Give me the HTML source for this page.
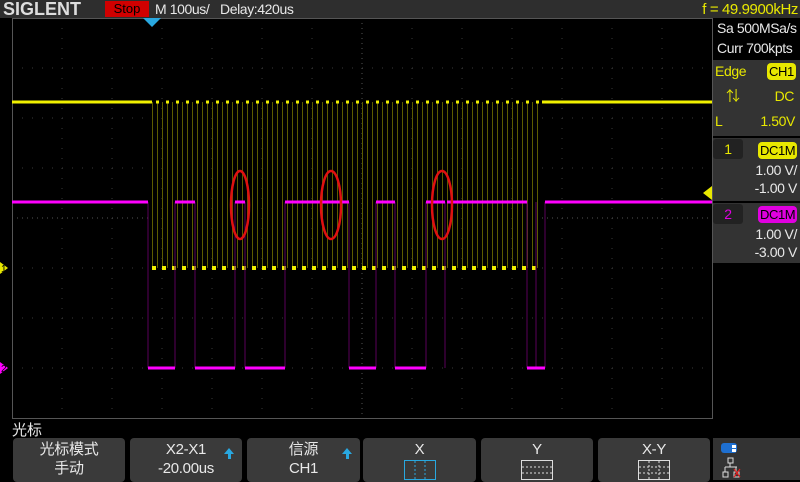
<!DOCTYPE html>
<html><head><meta charset="utf-8"><style>
*{margin:0;padding:0;box-sizing:border-box}
body{width:800px;height:480px;background:#000;position:relative;overflow:hidden;font-family:"Liberation Sans","Noto Sans CJK SC",sans-serif;color:#fff}
.a{position:absolute;white-space:nowrap}
.btn{position:absolute;top:438px;height:44px;background:#3a3a3a;border-radius:4px;text-align:center;font-size:15px;line-height:19px;padding-top:2px;color:#e8e8e8;letter-spacing:-0.3px}
.arr{position:absolute;right:8px;top:10px;width:0;height:0;border-left:5px solid transparent;border-right:5px solid transparent;border-bottom:6px solid #29a8e0}
.arr:after{content:"";position:absolute;left:-1px;top:6px;width:3px;height:5px;background:#29a8e0}
.y{color:#e8e800}
.s{font-size:14px;letter-spacing:-0.4px}
.badge{position:absolute;border-radius:4px;font-size:13px;line-height:17px;padding:0 2px;color:#000;letter-spacing:-0.4px}
</style></head><body>
<div class="a" style="left:0;top:0;width:800px;height:18px;background:#2e2e2e"></div>
<div class="a" style="left:3px;top:-1px;font-weight:bold;font-size:18px;color:#ddd;transform:scaleX(1.0);transform-origin:left">SIGLENT</div>
<div class="a" style="left:105px;top:1px;width:44px;height:16px;background:#d00000;color:#000;font-size:13px;line-height:16px;text-align:center">Stop</div>
<div class="a s" style="left:155px;top:1px;line-height:17px;color:#e8e8e8">M 100us/</div>
<div class="a s" style="left:220px;top:1px;line-height:17px;color:#e8e8e8">Delay:420us</div>
<div class="a y s" style="right:2px;top:1px;font-size:15px;line-height:17px">f = 49.9900kHz</div>

<svg class="a" style="left:0;top:0" width="800" height="480">
<defs>
<pattern id="cv" x="152" y="0" width="10" height="10" patternUnits="userSpaceOnUse"><rect x="0" width="1" height="10" fill="#5c5c00"/><rect x="5" width="1" height="10" fill="#5c5c00"/></pattern>
</defs>
<g stroke="#3a3a3a" stroke-width="1" stroke-dasharray="1 9">
<path d="M62 18V418M112 18V418M162 18V418M212 18V418M262 18V418M312 18V418M412 18V418M462 18V418M512 18V418M562 18V418M612 18V418M662 18V418"/>
<path d="M12 68H712M12 118H712M12 168H712M12 268H712M12 318H712M12 368H712"/>
</g>
<g stroke="#555" stroke-width="1" stroke-dasharray="1 4"><path d="M362 18V418M12 218H712"/></g>
<rect x="12.5" y="18.5" width="700" height="400" fill="none" stroke="#555"/>
<polygon points="143,18 161,18 152,27" fill="#29a8e0"/>
<rect x="152" y="102" width="390" height="166" fill="url(#cv)"/>
<path d="M12 102H152M542 102H712" stroke="#f0f000" stroke-width="3"/>
<line x1="156" y1="102" x2="542" y2="102" stroke="#f0f000" stroke-width="3" stroke-dasharray="3 7"/>
<line x1="152" y1="268" x2="542" y2="268" stroke="#f0f000" stroke-width="4" stroke-dasharray="4 6"/>
<path d="M148 202V368M175 202V368M195 202V368M235 202V368M245 202V368M285 202V368M349 202V368M376 202V368M395 202V368M426 202V368M445 202V368M527 202V368M536 202V368M545 202V368" stroke="#5a005a" stroke-width="1"/>
<path d="M12 202H148M175 202H195M235 202H245M285 202H349M376 202H395M426 202H445M447 202H527M545 202H712M148 368H175M195 368H235M245 368H285M349 368H376M395 368H426M527 368H545" stroke="#ff00ff" stroke-width="3"/>
<g fill="none" stroke="#e01010" stroke-width="2.5">
<ellipse cx="240" cy="205" rx="9" ry="34"/><ellipse cx="331" cy="205" rx="10" ry="34"/><ellipse cx="442" cy="205" rx="10" ry="34"/>
</g>
<polygon points="0,262 8,268 0,274" fill="#e8e800"/>
<text x="1" y="272" font-size="10" fill="#000" font-family="Liberation Sans">1</text>
<polygon points="0,362 8,368 0,374" fill="#ff00ff"/>
<text x="1" y="372" font-size="10" fill="#000" font-family="Liberation Sans">2</text>
<polygon points="712,186 703,193 712,200" fill="#e8e800"/>
</svg>

<div class="a s" style="left:713px;top:18px;width:87px;height:42px;background:#000;line-height:20px;color:#e8e8e8;padding-left:4px">Sa 500MSa/s<br>Curr 700kpts</div>
<div class="a" style="left:713px;top:60px;width:87px;height:76px;background:#333"></div>
<div class="a y s" style="left:715px;top:63px">Edge</div>
<div class="badge" style="left:767px;top:63px;background:#e8e800">CH1</div>
<div class="a y s" style="left:726px;top:86px">⇅</div>
<div class="a y s" style="right:6px;top:88px">DC</div>
<div class="a y s" style="left:715px;top:113px">L</div>
<div class="a y s" style="right:5px;top:113px">1.50V</div>
<div class="a" style="left:713px;top:138px;width:87px;height:63px;background:#333"></div>
<div class="a s" style="left:713px;top:139px;width:30px;height:20px;background:#222;border-radius:3px;text-align:center;color:#e8e800;line-height:20px">1</div>
<div class="badge" style="left:758px;top:142px;background:#e8e800">DC1M</div>
<div class="a s" style="right:3px;top:161px;color:#e8e8e8;text-align:right;line-height:18px">1.00 V/<br>-1.00 V</div>
<div class="a" style="left:713px;top:203px;width:87px;height:60px;background:#333"></div>
<div class="a s" style="left:713px;top:204px;width:30px;height:20px;background:#222;border-radius:3px;text-align:center;color:#e000e0;line-height:20px">2</div>
<div class="badge" style="left:758px;top:206px;background:#e000e0">DC1M</div>
<div class="a s" style="right:3px;top:225px;color:#e8e8e8;text-align:right;line-height:18px">1.00 V/<br>-3.00 V</div>

<div class="a" style="left:12px;top:419px;font-size:15px;color:#e8e8e8">光标</div>
<div class="btn" style="left:13px;width:112px">光标模式<br>手动</div>
<div class="btn" style="left:130px;width:112px">X2-X1<br>-20.00us<span class="arr"></span></div>
<div class="btn" style="left:247px;width:113px">信源<br>CH1<span class="arr"></span></div>
<div class="btn" style="left:363px;width:113px">X<svg style="display:block;margin:1px auto 0" width="32" height="20"><rect x="0.5" y="0.5" width="31" height="19" fill="none" stroke="#29a8e0"/><path d="M11 1V19M21 1V19" stroke="#29a8e0" stroke-dasharray="2 2"/></svg></div>
<div class="btn" style="left:481px;width:112px">Y<svg style="display:block;margin:1px auto 0" width="32" height="20"><rect x="0.5" y="0.5" width="31" height="19" fill="none" stroke="#ddd"/><path d="M1 7H31M1 13H31" stroke="#ddd" stroke-dasharray="2 2"/></svg></div>
<div class="btn" style="left:598px;width:112px">X-Y<svg style="display:block;margin:1px auto 0" width="32" height="20"><rect x="0.5" y="0.5" width="31" height="19" fill="none" stroke="#ddd"/><path d="M1 7H31M1 13H31M11 1V19M21 1V19" stroke="#ddd" stroke-dasharray="2 2"/></svg></div>
<div class="a" style="left:713px;top:438px;width:87px;height:42px;background:#333"></div>
<svg class="a" style="left:720px;top:442px" width="30" height="36">
<rect x="1" y="1" width="16" height="10" rx="3" fill="#1e6fd0"/><rect x="12" y="3" width="4" height="3" fill="#fff"/><rect x="12" y="7" width="4" height="3" fill="#fff"/>
<path d="M8 16h5v5h-5zM3 30h5v5h-5zM14 30h5v5h-5zM10 21v4M5 25h12M5 25v5M16 25v5" fill="none" stroke="#ddd"/>
<path d="M14 27l6 8M20 27l-6 8" stroke="#e02020" stroke-width="1.2"/>
</svg>
</body></html>
